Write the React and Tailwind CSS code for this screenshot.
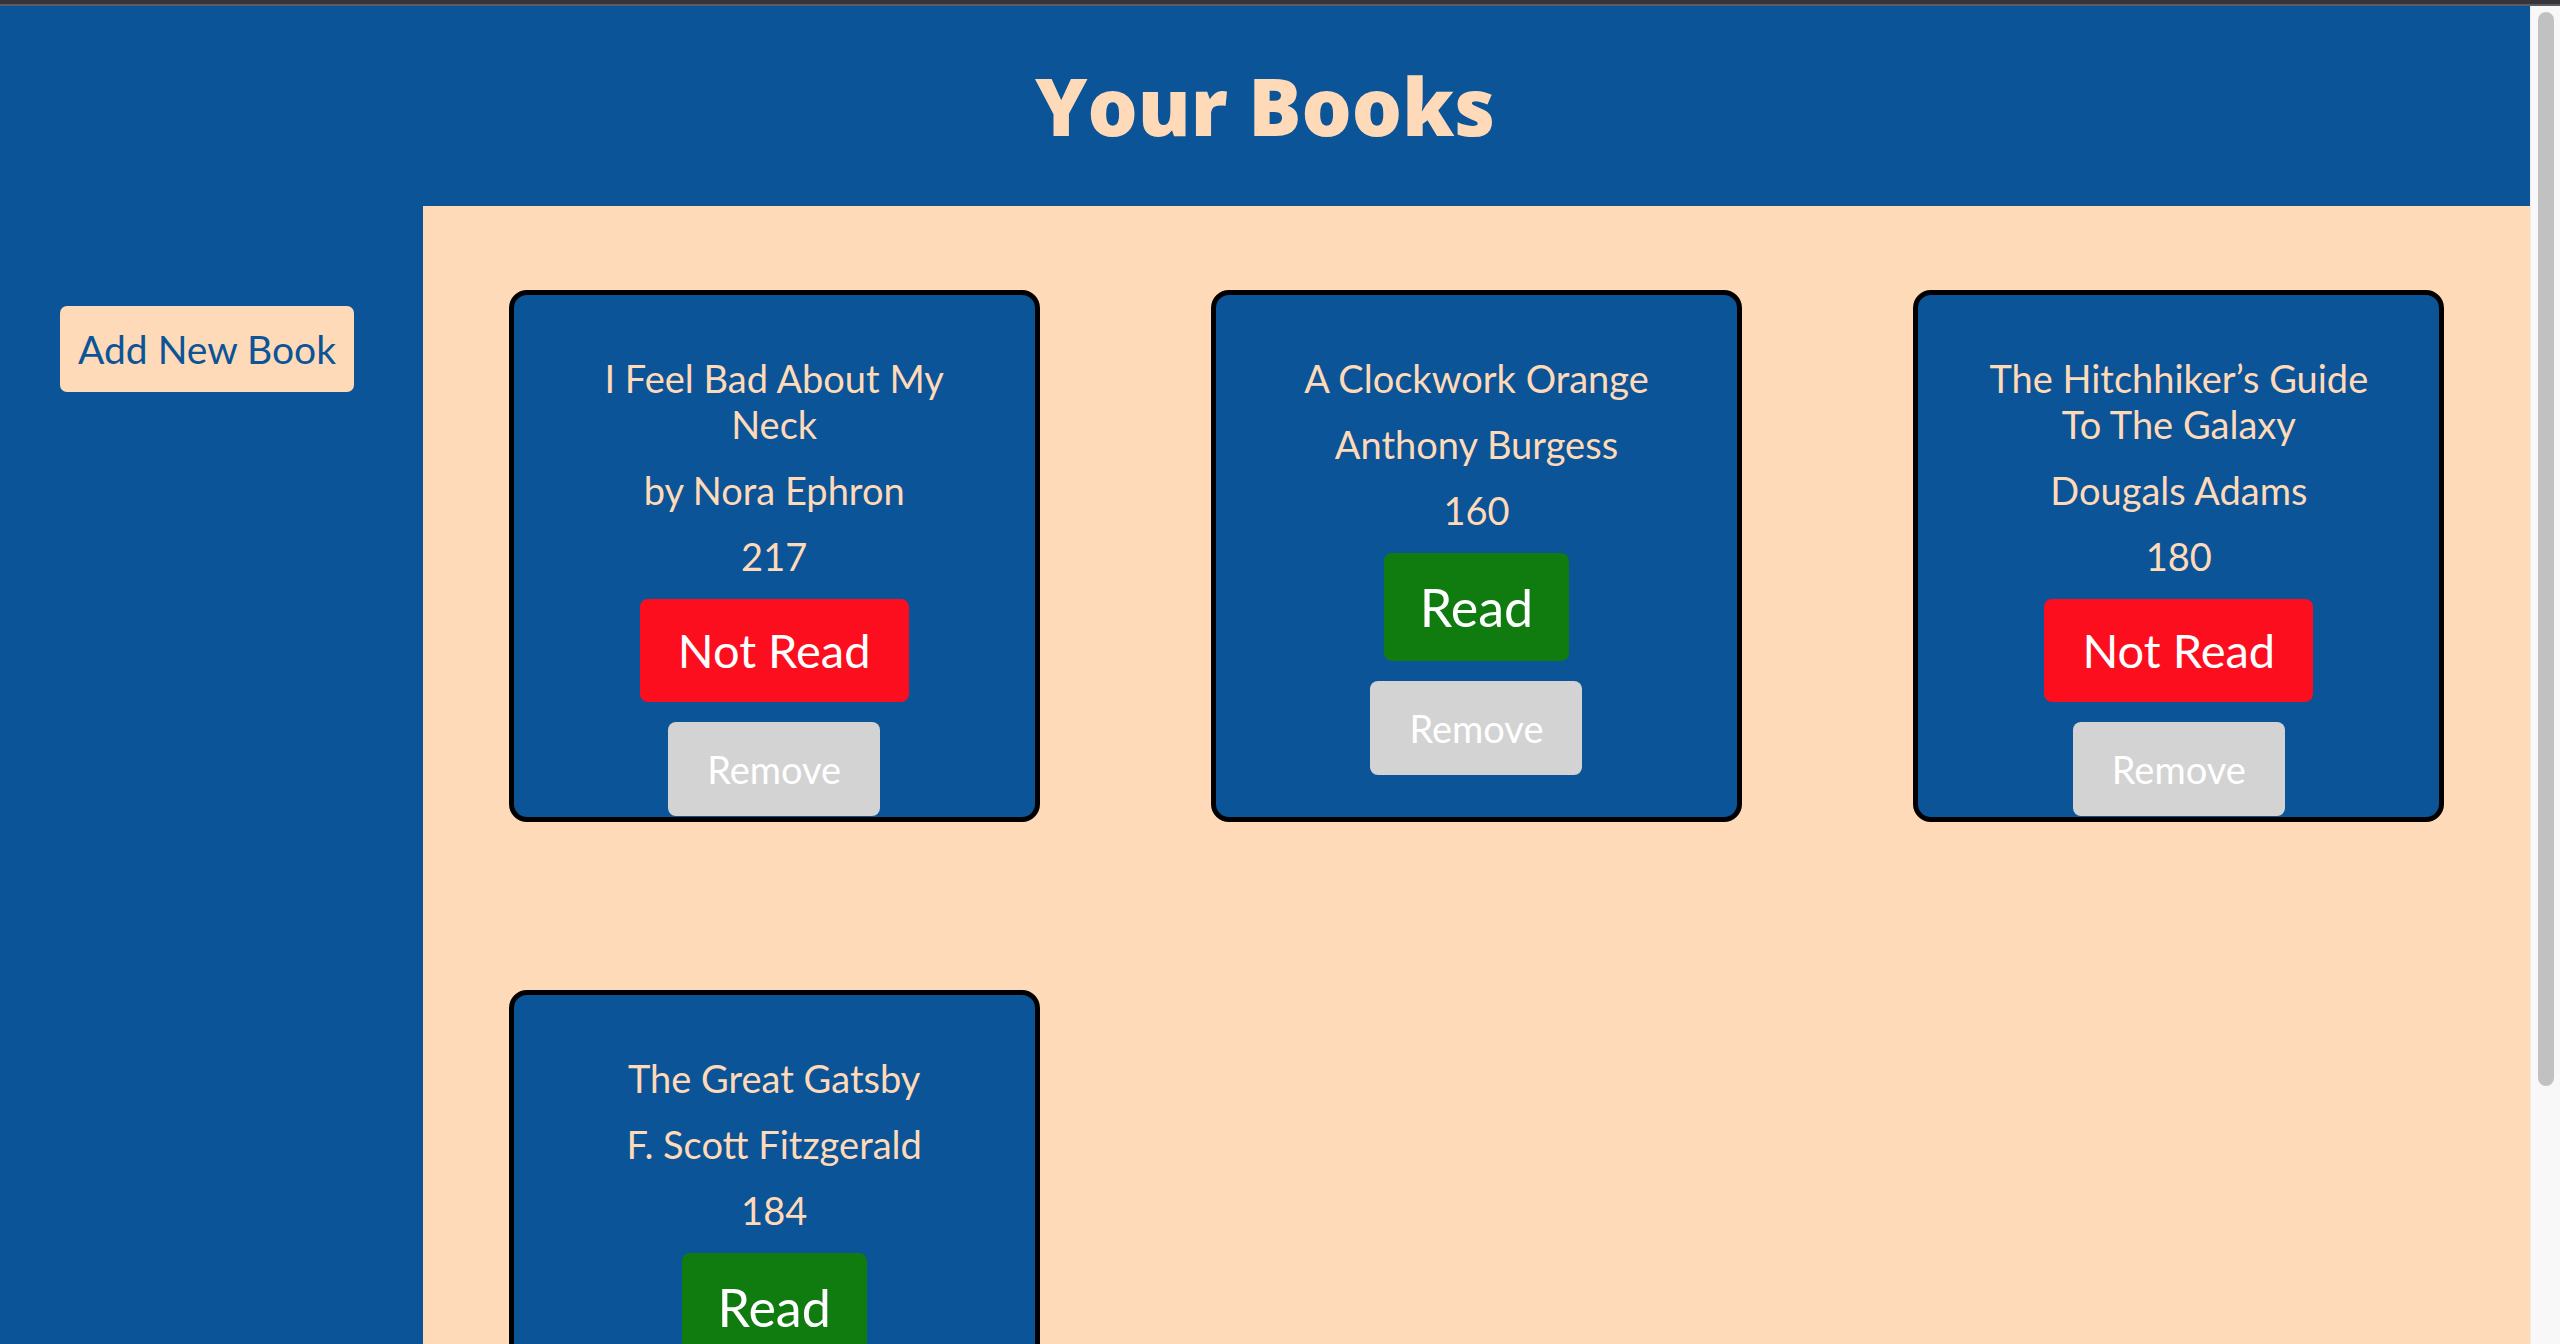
import React from "react";

const books = [
  { title: "I Feel Bad About My Neck", author: "by Nora Ephron", pages: 217, read: false },
  { title: "A Clockwork Orange", author: "Anthony Burgess", pages: 160, read: true },
  { title: "The Hitchhiker’s Guide To The Galaxy", author: "Dougals Adams", pages: 180, read: false },
  { title: "The Great Gatsby", author: "F. Scott Fitzgerald", pages: 184, read: true },
];

function BookCard({ book }) {
  return (
    <div className="w-[531px] h-[532px] shrink-0 overflow-hidden rounded-[18px] border-[5px] border-black bg-[#0b5497] pt-[60px] px-[50px] flex flex-col items-center gap-[20px] text-center">
      <p className="text-[38px] leading-[46px] text-[#ffdab9] max-w-[400px]">{book.title}</p>
      <p className="text-[38px] leading-[46px] text-[#ffdab9]">{book.author}</p>
      <p className="text-[38px] leading-[46px] text-[#ffdab9]">{book.pages}</p>
      {book.read ? (
        <button className="w-[185px] h-[108px] shrink-0 rounded-[8px] bg-[#107c10] text-white text-[52px] leading-none flex items-center justify-center">
          Read
        </button>
      ) : (
        <button className="w-[269px] h-[103px] shrink-0 rounded-[8px] bg-[#fc0e1f] text-white text-[47px] leading-none flex items-center justify-center">
          Not Read
        </button>
      )}
      <button className="w-[212px] h-[94px] shrink-0 rounded-[8px] bg-[#d3d3d3] text-white text-[38px] leading-none flex items-center justify-center">
        Remove
      </button>
    </div>
  );
}

export default function App() {
  return (
    <div className="h-[1344px] w-[2560px] overflow-hidden flex flex-col font-['Lato','Open_Sans',sans-serif]">
      <div className="h-[4px] bg-[#36363a] shrink-0" />
      <div className="h-[2px] bg-[#5c5c60] shrink-0" />
      <div className="flex flex-1 min-h-0">
        <div className="flex-1 flex flex-col min-w-0">
          <header className="h-[200px] shrink-0 bg-[#0b5497] flex items-center justify-center">
            <h1 className="font-['Open_Sans','Lato',sans-serif] text-[79px] font-extrabold leading-none text-[#ffdab9] -mt-[2px]">Your Books</h1>
          </header>
          <div className="flex flex-1 min-h-0">
            <aside className="w-[423px] shrink-0 bg-[#0b5497] pt-[100px] pl-[60px]">
              <button className="w-[294px] h-[86px] rounded-[7px] bg-[#ffdab9] text-[#0b5497] text-[39px] leading-none flex items-center justify-center">
                Add New Book
              </button>
            </aside>
            <main className="flex-1 bg-[#ffdab9] grid grid-cols-3 content-start justify-items-center pt-[84px] gap-y-[168px]">
              {books.map((b) => (
                <BookCard key={b.title} book={b} />
              ))}
            </main>
          </div>
        </div>
        <div className="w-[30px] shrink-0 bg-[#f8f8f8] border-l border-[#ebebeb] pl-[7px] pt-[6px]">
          <div className="w-[16px] h-[1074px] rounded-full bg-[#c1c1c1]" />
        </div>
      </div>
    </div>
  );
}
